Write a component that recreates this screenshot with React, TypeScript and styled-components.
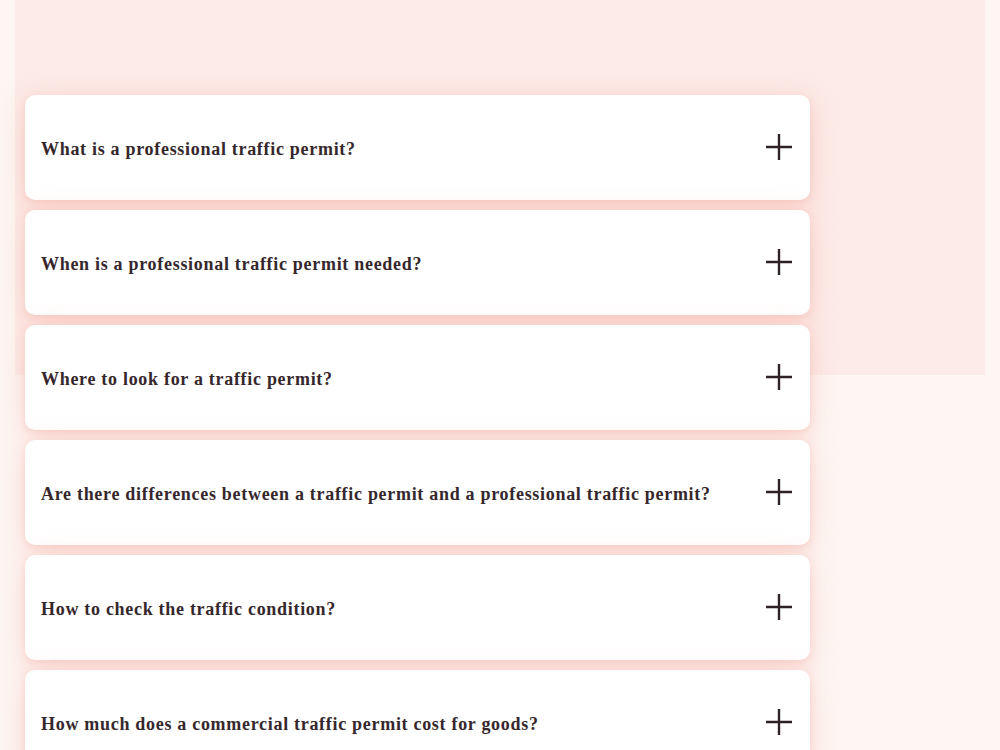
import React from "react";
import styled, { createGlobalStyle } from "styled-components";

const GlobalStyle = createGlobalStyle`
  html, body {
    margin: 0;
    padding: 0;
    background: #fdf6f3;
  }
  body {
    font-family: "Liberation Serif", "Times New Roman", serif;
    overflow: hidden;
  }
`;

const Page = styled.div`
  width: 1000px;
  height: 750px;
  padding: 0 15px;
  box-sizing: border-box;
`;

// pink hero band behind the top of the list
const Section = styled.section`
  background: linear-gradient(#fcebe7, #fcebe7) top left / 100% 375px no-repeat;
  padding: 95px 0 0 10px;
  height: 100%;
  box-sizing: border-box;
`;

const FaqList = styled.div`
  display: flex;
  flex-direction: column;
  gap: 10px;
  width: 785px;
`;

const Item = styled.div`
  display: flex;
  align-items: center;
  justify-content: space-between;
  height: 105px;
  flex-shrink: 0;
  padding: 0 17px 0 16px;
  box-sizing: border-box;
  background: #ffffff;
  border-radius: 10px;
  box-shadow: 0 6px 28px rgba(246, 170, 160, 0.45), 0 2px 6px rgba(246, 180, 170, 0.35);
  cursor: pointer;
`;

const Question = styled.h3`
  margin: 0;
  padding-top: 4px;
  font-size: 18px;
  font-weight: 700;
  color: #36272d;
  letter-spacing: 0.7px;
`;

const Toggle = styled.span`
  display: flex;
  width: 28px;
  height: 28px;
  margin-top: -2px;
  color: #2e2226;
`;

const Plus = () => (
  <svg width="28" height="28" viewBox="0 0 28 28" fill="none">
    <path d="M14 1v26M1 14h26" stroke="currentColor" strokeWidth="2.4" />
  </svg>
);

const questions = [
  "What is a professional traffic permit?",
  "When is a professional traffic permit needed?",
  "Where to look for a traffic permit?",
  "Are there differences between a traffic permit and a professional traffic permit?",
  "How to check the traffic condition?",
  "How much does a commercial traffic permit cost for goods?",
];

export default function App() {
  return (
    <>
      <GlobalStyle />
      <Page>
        <Section>
          <FaqList>
            {questions.map((q) => (
              <Item key={q}>
                <Question>{q}</Question>
                <Toggle>
                  <Plus />
                </Toggle>
              </Item>
            ))}
          </FaqList>
        </Section>
      </Page>
    </>
  );
}
